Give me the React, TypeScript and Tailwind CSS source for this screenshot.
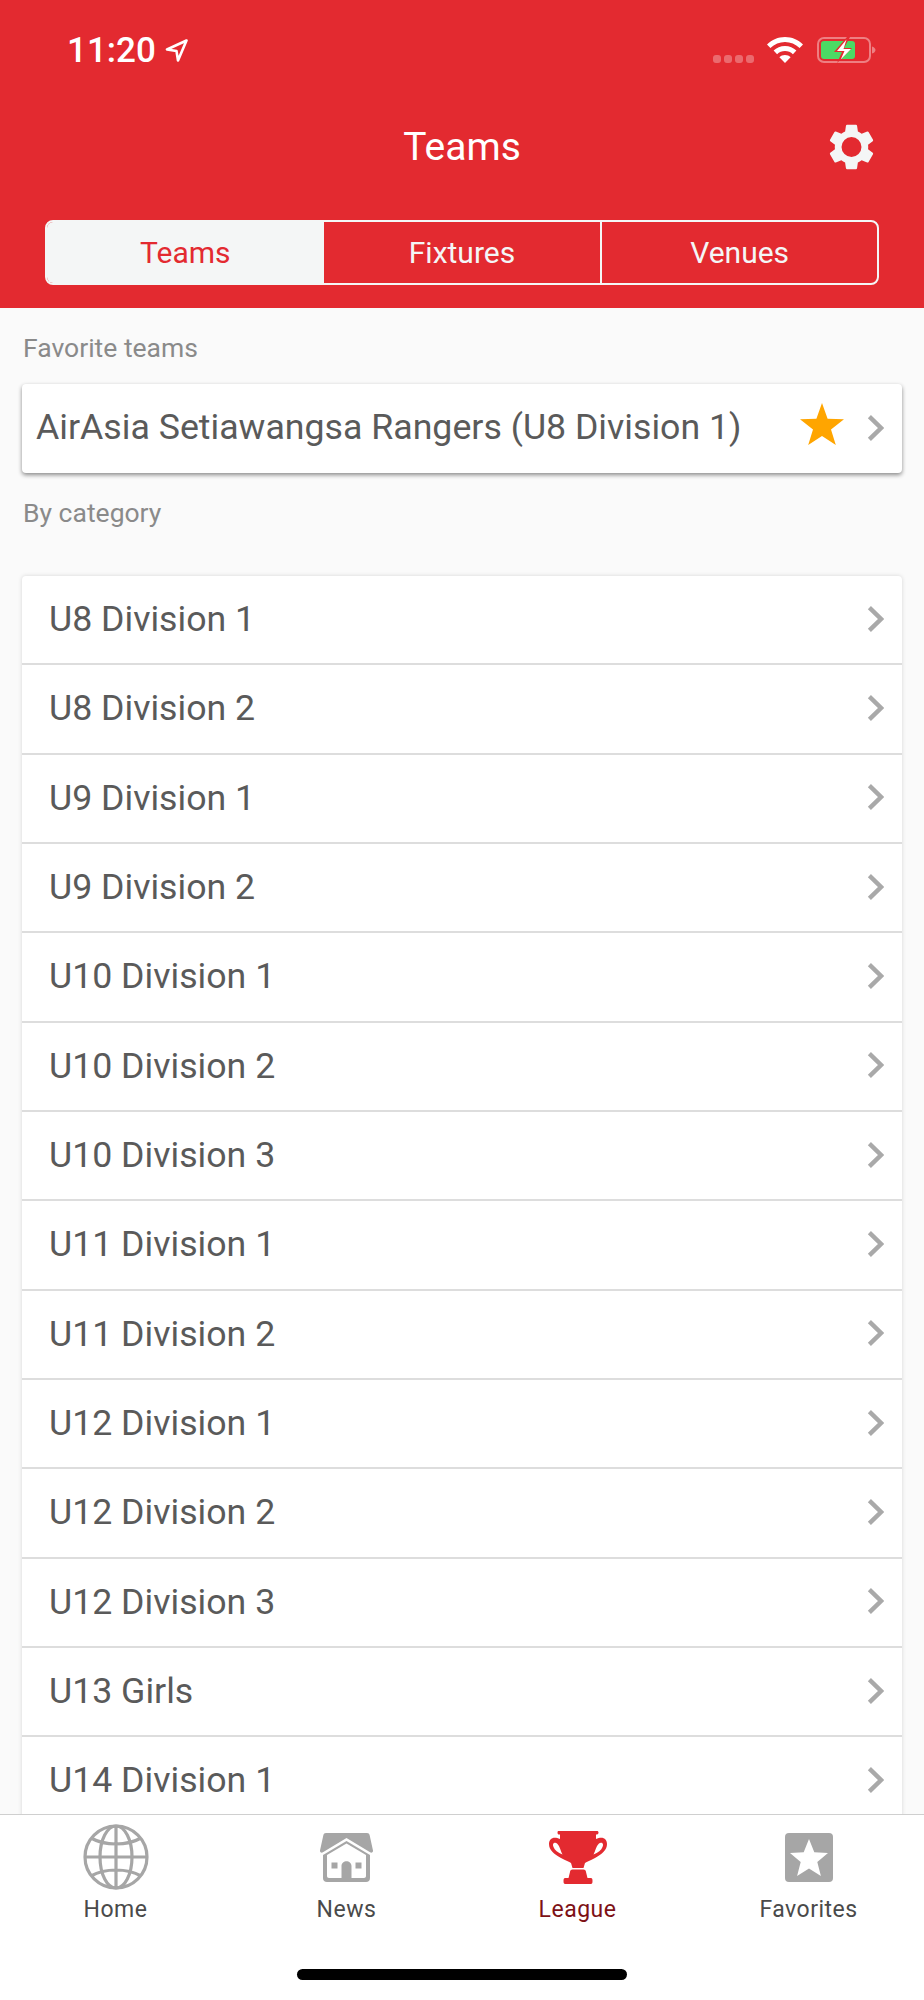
import React from 'react';

const divisions = [
  'U8 Division 1',
  'U8 Division 2',
  'U9 Division 1',
  'U9 Division 2',
  'U10 Division 1',
  'U10 Division 2',
  'U10 Division 3',
  'U11 Division 1',
  'U11 Division 2',
  'U12 Division 1',
  'U12 Division 2',
  'U12 Division 3',
  'U13 Girls',
  'U14 Division 1',
];

const Chevron = () => (
  <svg viewBox="0 0 17 26" className="w-[17px] h-[26px] shrink-0 mb-[2px]" fill="none" stroke="#a9a9a9" strokeWidth="4.4">
    <path d="M2.400 1.600 14 13 2.400 24.400" />
  </svg>
);

const StatusBar = () => (
  <div className="flex items-center h-[26px] mt-[37px] pl-[67px] pr-[48px]">
    <span className="text-[35px] leading-none font-medium text-white">11:20</span>
    <svg viewBox="0 0 23 23" className="w-[23px] h-[23px] ml-[9px]" fill="none" stroke="#fff" strokeWidth="2.600" strokeLinejoin="round">
      <path d="M21.500 1.500 2 10.500l9.500 1.500 1.500 9.500z" />
    </svg>
    <div className="flex gap-[3px] ml-auto mt-[18px]">
      <span className="w-[8px] h-[8px] rounded-[3px] bg-white/30" />
      <span className="w-[8px] h-[8px] rounded-[3px] bg-white/30" />
      <span className="w-[8px] h-[8px] rounded-[3px] bg-white/30" />
      <span className="w-[8px] h-[8px] rounded-[3px] bg-white/30" />
    </div>
    <svg viewBox="0 0 36 26" className="w-[36px] h-[26px] ml-[13px]" fill="#fff">
      <path d="M18 0C11 0 5 2.700 0 7.500l3.400 3.600C7.500 7.200 12.500 5 18 5s10.500 2.200 14.600 6.100L36 7.500C31 2.700 25 0 18 0z" />
      <path d="M18 9c-4.500 0-8.400 1.700-11.400 4.600l3.500 3.600C12.200 15.200 15 14 18 14s5.800 1.200 7.900 3.200l3.500-3.600C26.400 10.700 22.500 9 18 9z" />
      <path d="M18 18c-2.200 0-4.200.9-5.600 2.300L18 26l5.600-5.700C22.200 18.900 20.200 18 18 18z" />
    </svg>
    <svg viewBox="0 0 59 26" className="w-[59px] h-[26px] ml-[14px]">
      <rect x="1" y="1" width="52" height="24" rx="6" fill="none" stroke="#fff" strokeOpacity="0.4" strokeWidth="2" />
      <path d="M55 9.500c2 .5 3.500 2 3.500 3.500s-1.500 3-3.500 3.500z" fill="#fff" fillOpacity="0.4" />
      <rect x="4" y="4" width="34" height="18" rx="3" fill="#4cd964" />
      <path d="M30 0 17 15h8l-5 11 15-15h-8l6-11z" fill="#e32a30" />
      <path d="M29.500 2.500 20 14h7.500l-3.800 8.500L34 12h-7.500l3-9.500z" fill="#fff" />
    </svg>
  </div>
);

const Header = () => (
  <div className="h-[308px] shrink-0 bg-[#e32a30] flex flex-col">
    <StatusBar />
    <div className="grid grid-cols-[1fr_auto_1fr] items-center mt-[60px] px-[50px]">
      <span />
      <span className="text-[39px] leading-[48px] text-white">Teams</span>
      <svg viewBox="2.300 2 19.400 20" className="w-[45px] h-[48px] justify-self-end" fill="#f4f6f6" fillRule="evenodd">
        <path d="M19.140 12.940c.04-.3.06-.61.06-.94 0-.32-.02-.64-.07-.94l2.030-1.580c.18-.14.23-.41.12-.61l-1.920-3.320c-.12-.22-.37-.29-.59-.22l-2.390.96c-.5-.38-1.030-.7-1.620-.94l-.36-2.540c-.04-.24-.24-.41-.48-.41h-3.840c-.24 0-.43.17-.47.41l-.36 2.540c-.59.24-1.130.57-1.620.94l-2.390-.96c-.22-.08-.47 0-.59.22L2.740 8.870c-.12.21-.08.47.12.61l2.030 1.580c-.05.3-.09.63-.09.94s.02.64.07.94l-2.030 1.580c-.18.14-.23.41-.12.61l1.920 3.320c.12.22.37.29.59.22l2.390-.96c.5.38 1.030.7 1.620.94l.36 2.540c.05.24.24.41.48.41h3.840c.24 0 .44-.17.47-.41l.36-2.540c.59-.24 1.130-.56 1.620-.94l2.390.96c.22.08.47 0 .59-.22l1.920-3.320c.12-.22.07-.47-.12-.61l-2.010-1.580zM12 16.300a4.300 4.300 0 1 1 0-8.600 4.300 4.300 0 0 1 0 8.600z" />
      </svg>
    </div>
    <div className="grid grid-cols-3 h-[65px] mx-[45px] mt-[49px] border-2 border-[#f4f6f6] rounded-[8px] overflow-hidden text-[30px]">
      <div className="flex items-center justify-center bg-[#f4f6f6] text-[#e32a30]">Teams</div>
      <div className="flex items-center justify-center text-[#f4f6f6]">Fixtures</div>
      <div className="flex items-center justify-center text-[#f4f6f6] border-l-2 border-[#f4f6f6]">Venues</div>
    </div>
  </div>
);

const GlobeIcon = () => (
  <svg viewBox="0 0 66 66" className="w-[66px] h-[66px]" fill="none" stroke="#a6a6a6" strokeWidth="3.200">
    <circle cx="33" cy="33" r="31" />
    <ellipse cx="33" cy="33" rx="16" ry="31" />
    <path d="M33 2v62M2 33h62M8 14c7 4 15 6 25 6s18-2 25-6M8 52c7-4 15-6 25-6s18 2 25 6" />
  </svg>
);

const HouseIcon = () => (
  <svg viewBox="0 0 53 49" className="w-[53px] h-[49px]">
    <path d="M6 0h41c1.500 0 2.300.7 2.600 2L53 17.500c.3 1.500-1 2.500-2.500 2L26.500 5 2.500 19.500C1 20 -.3 19 0 17.500L3.400 2C3.700.7 4.500 0 6 0z" fill="#a6a6a6" />
    <path d="M3 22 26.500 8 50 22v23c0 2.500-1.500 4-4 4H7c-2.500 0-4-1.500-4-4z" fill="#a6a6a6" />
    <path d="M7 22 26.500 10.500 46 22v21c0 1.200-.8 2-2 2H31.500V33c0-6.500-10-6.500-10 0v12H9c-1.200 0-2-.8-2-2z" fill="#fff" />
    <rect x="11.500" y="29.500" width="6" height="6" fill="#a6a6a6" />
    <rect x="35.500" y="29.500" width="6" height="6" fill="#a6a6a6" />
  </svg>
);

const TrophyIcon = () => (
  <svg viewBox="0 0 58 53" className="w-[58px] h-[53px]" fill="#e32a30">
    <path d="M10 0h38c1 0 1.500.6 1.500 1.500S49 3.500 48 3.500h-1V8c7-3 11 0 11 5 0 6-5 10-12 14-5 2.500-8 3.500-10 5l-1.500 5h-11L22 32c-2-1.500-5-2.500-10-5C5 23 0 19 0 13c0-5 4-8 11-5V3.500h-1C9 3.500 8.500 2.900 8.500 1.500S9 0 10 0z" />
    <path d="M5 12c-1 .5-1.500 2-.5 4 1 3 4.500 5.500 9 7.500-2-4-3-9-5.500-11C7 11.500 6 11.500 5 12zM53 12c1 .5 1.500 2 .5 4-1 3-4.500 5.500-9 7.500 2-4 3-9 5.500-11 1-1 2-1 3.500-.5z" fill="#fff" />
    <path d="M21 41c0-1.500 1-2.500 2.500-2.500h11c1.500 0 2.500 1 2.500 2.500l1.500 6H42c1 0 1.500.8 1.500 3S43 53 42 53H16c-1 0-1.500-.8-1.500-3s.5-3 1.500-3h3.500z" />
  </svg>
);

const StarBoxIcon = () => (
  <svg viewBox="0 0 48 49" className="w-[48px] h-[49px]">
    <rect width="48" height="49" rx="4" fill="#a6a6a6" />
    <path d="M24 6l5.300 13.300 13.700.7-10.700 9 3.600 14L24 35.400 12.100 43l3.600-14L5 20l13.700-.7z" fill="#fff" />
  </svg>
);

const tabs = [
  { label: 'Home', icon: <GlobeIcon />, active: false },
  { label: 'News', icon: <HouseIcon />, active: false },
  { label: 'League', icon: <TrophyIcon />, active: true },
  { label: 'Favorites', icon: <StarBoxIcon />, active: false },
];

const TabBar = () => (
  <div className="h-[186px] shrink-0 bg-white border-t border-[#cfcfcf] flex flex-col">
    <div className="grid grid-cols-4 pt-[9px]">
      {tabs.map(tab => (
        <div key={tab.label} className="flex flex-col items-center">
          <div className="h-[66px] flex items-center justify-center">{tab.icon}</div>
          <span className={`text-[23px] leading-[26px] mt-[7px] tracking-[0.5px] ${tab.active ? 'text-[#7d1116]' : 'text-[#4a4a4a]'}`}>
            {tab.label}
          </span>
        </div>
      ))}
    </div>
    <div className="w-[330px] h-[11px] rounded-full bg-black mx-auto mt-[46px]" />
  </div>
);

export default function App() {
  return (
    <div className="w-[924px] h-[2000px] flex flex-col overflow-hidden bg-[#fafafa]" style={{ fontFamily: 'Roboto, sans-serif' }}>
      <Header />
      <div className="flex-1 min-h-0 overflow-hidden px-[22px]">
        <p className="text-[26.500px] leading-[30px] text-[#8a8a8a] mt-[25px] ml-px">Favorite teams</p>
        <div className="flex items-center h-[89px] mt-[21px] pl-[14px] pr-[18px] bg-white rounded-[4px] shadow-[0_2px_4px_rgba(0,0,0,0.45)]">
          <span className="text-[35.700px] text-[#5a5a5a] flex-1 mb-[2px]">AirAsia Setiawangsa Rangers (U8 Division 1)</span>
          <svg viewBox="0 0 44 42" className="w-[44px] h-[42px] mr-[23px] mb-[9px]" fill="#ffa500">
            <path d="M22 0l5.600 15.800L44 16.200 31 26.500 35.800 42 22 32.900 8.200 42 13 26.500 0 16.200l16.400-.4z" />
          </svg>
          <Chevron />
        </div>
        <p className="text-[26.500px] leading-[30px] text-[#8a8a8a] mt-[25px] ml-px">By category</p>
        <div className="mt-[48px] bg-white rounded-[4px] shadow-[0_0_4px_rgba(0,0,0,0.15)]">
          {divisions.map(name => (
            <div key={name} className="flex items-center justify-between h-[89.330px] pl-[27px] pr-[18px] border-b-2 border-[#dddddd]">
              <span className="text-[35.700px] text-[#5a5a5a]">{name}</span>
              <Chevron />
            </div>
          ))}
        </div>
      </div>
      <TabBar />
    </div>
  );
}
